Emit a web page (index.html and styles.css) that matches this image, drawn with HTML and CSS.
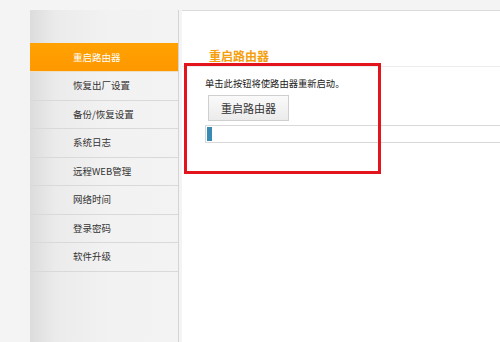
FILE: index.html
```html
<!DOCTYPE html>
<html lang="zh-CN">
<head>
<meta charset="utf-8">
<link rel="stylesheet" href="styles.css">
</head>
<body>
<div class="page">
  <nav class="sidebar">
    <div class="item active">重启路由器</div>
    <div class="item">恢复出厂设置</div>
    <div class="item">备份/恢复设置</div>
    <div class="item">系统日志</div>
    <div class="item">远程WEB管理</div>
    <div class="item">网络时间</div>
    <div class="item">登录密码</div>
    <div class="item">软件升级</div>
  </nav>
  <main class="main">
    <div class="title">重启路由器</div>
    <div class="content">
      <p class="desc">单击此按钮将使路由器重新启动。</p>
      <button class="btn">重启路由器</button>
      <div class="progress"><div class="fill"></div></div>
    </div>
    <div class="mark"></div>
  </main>
</div>
</body>
</html>
```

FILE: styles.css
```css
html, body {
  margin: 0;
  padding: 0;
  width: 500px;
  height: 342px;
  overflow: hidden;
  background: #f4f4f4;
  font-family: "Noto Sans CJK SC", "Liberation Sans", sans-serif;
}
.page {
  display: flex;
  padding: 10px 0 0 30px;
  height: 332px;
  gap: 3px;
}
.sidebar {
  width: 149px;
  border-right: 1px solid #d4d4d4;
  background: linear-gradient(to right, #dcdcdc 0px, #ebebeb 25px, #f2f2f2 80px, #f3f3f3 100%);
  padding-top: 33px;
  box-sizing: border-box;
  height: 332px;
}
.item {
  height: 27.5px;
  line-height: 27.5px;
  border-bottom: 1px solid #d9d9d9;
  padding-left: 43px;
  font-size: 9.5px;
  color: #333;
}
.item.active {
  background: linear-gradient(to bottom, #ffa200, #ff9800);
  color: #fff;
  border-bottom: 1px solid #f0e0c0;
  height: 28px;
  line-height: 28px;
}
.main {
  flex: 1;
  background: #fff;
  border-top: 1px solid #dcdcdc;
  position: relative;
}
.title {
  padding: 37px 0 3px 27px;
  font-size: 12px;
  line-height: 15px;
  font-weight: bold;
  color: #f5a00e;
  border-bottom: 1px solid #ececec;
}
.content {
  padding: 10px 0 0 23px;
}
.desc {
  margin: 0;
  font-size: 9.3px;
  line-height: 12px;
  color: #222;
}
.btn {
  display: block;
  margin: 6px 0 0 3px;
  width: 81px;
  height: 26px;
  padding: 0;
  border: 1px solid #cfcfcf;
  background: linear-gradient(to bottom, #fafafa, #ebebeb);
  font-family: "Noto Sans CJK SC", sans-serif;
  font-size: 11px;
  color: #333;
}
.progress {
  margin-top: 4px;
  height: 14px;
  border: 1px solid #d8d8d8;
  border-right: none;
  background: #fff;
  padding: 1px;
}
.fill {
  width: 5px;
  height: 14px;
  background: #3a8bb3;
}
.mark {
  position: absolute;
  left: 2px;
  top: 52px;
  width: 191px;
  height: 105px;
  border: 3px solid #e3141b;
}
```
